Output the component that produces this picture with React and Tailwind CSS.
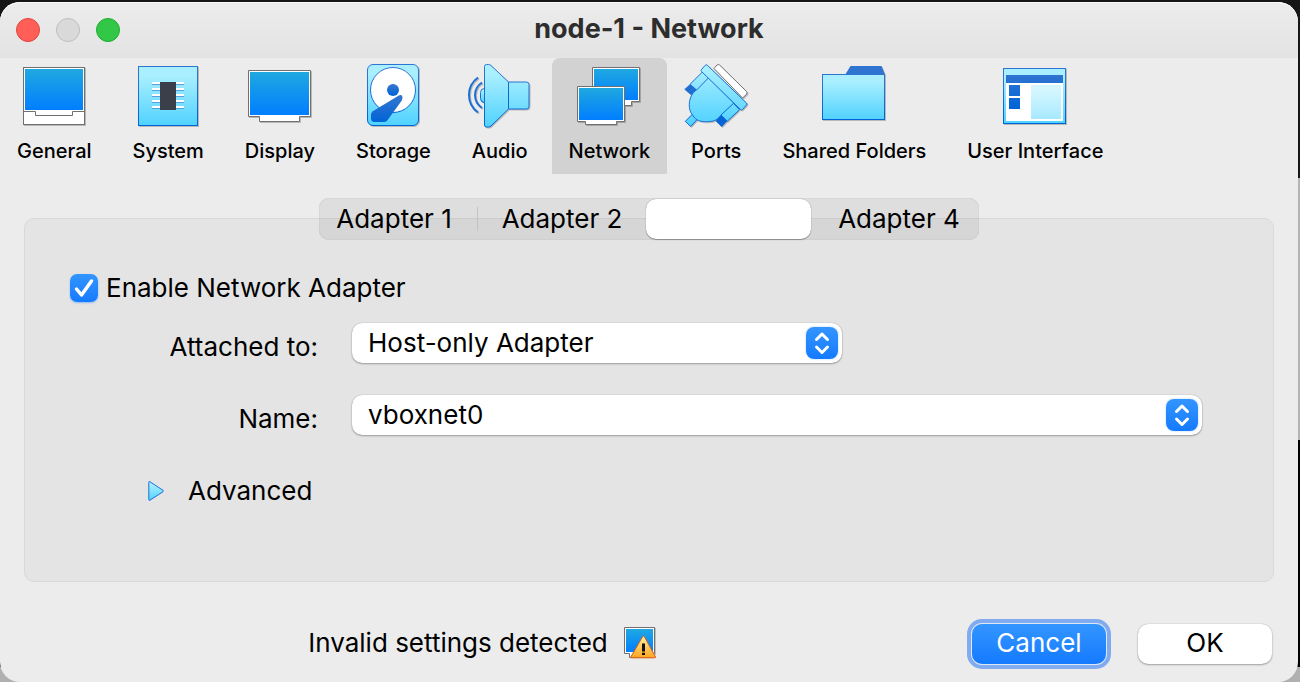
import React from 'react';

const DARK = 'url(#dark)';
const LIGHT = 'url(#light)';
const SCREEN = 'url(#screen)';

function Gradients() {
  return (
    <svg className="absolute h-0 w-0" aria-hidden="true">
      <defs>
        <linearGradient id="light" x1="0" y1="0" x2="0" y2="1">
          <stop offset="0.15" stopColor="#aaefff" />
          <stop offset="1" stopColor="#50d2ff" />
        </linearGradient>
        <linearGradient id="dark" x1="0" y1="0" x2="0" y2="1">
          <stop offset="0.15" stopColor="#2f74d0" />
          <stop offset="1" stopColor="#0064d7" />
        </linearGradient>
        <linearGradient id="screen" x1="0" y1="0" x2="0" y2="1">
          <stop offset="0" stopColor="#20a8e0" />
          <stop offset="1" stopColor="#007eff" />
        </linearGradient>
        <linearGradient id="warn" x1="0" y1="0" x2="0" y2="1">
          <stop offset="0" stopColor="#fff0a0" />
          <stop offset="1" stopColor="#ffa51e" />
        </linearGradient>
        <linearGradient id="portLight" gradientUnits="userSpaceOnUse" x1="0" y1="4" x2="0" y2="60">
          <stop offset="0" stopColor="#aaefff" />
          <stop offset="1" stopColor="#50d2ff" />
        </linearGradient>
        <linearGradient id="tile" gradientUnits="userSpaceOnUse" x1="0" y1="11" x2="0" y2="45">
          <stop offset="0" stopColor="#2f74d0" />
          <stop offset="1" stopColor="#0064d7" />
        </linearGradient>
      </defs>
    </svg>
  );
}

function Icon({ children }) {
  return (
    <svg className="-mx-3 h-16 w-16 overflow-visible drop-shadow-[1px_1px_0px_rgba(0,0,0,0.22)]" viewBox="0 0 64 64" fill="none" aria-hidden="true">
      {children}
    </svg>
  );
}

const GeneralIcon = () => (
  <Icon>
    <rect x="1.5" y="3.5" width="61" height="57" fill="#fff" stroke="#707070" />
    <rect x="3" y="5" width="58" height="41" fill={SCREEN} />
    <path d="M1.5 47.5h12v4h37v-4h12" stroke="#707070" />
  </Icon>
);

const SystemIcon = () => (
  <Icon>
    <rect x="2.5" y="2.5" width="59" height="59" fill={LIGHT} stroke={DARK} />
    {[18, 24, 30, 36, 42].map((y) => (
      <g key={y}>
        <path d={`M16 ${y + 1}h32`} stroke="#fff" strokeWidth="2" />
        <path d={`M16 ${y + 2.5}h32`} stroke="#5b9fe0" />
      </g>
    ))}
    <rect x="24" y="18" width="16" height="28" fill="#3a3f4a" />
  </Icon>
);

const DisplayIcon = () => (
  <Icon>
    <path d="M.5 6.5h62v46h-11v5h-40v-5h-11z" fill="#fff" stroke="#707070" />
    <rect x="2" y="8" width="59" height="43" fill={SCREEN} />
  </Icon>
);

const StorageIcon = () => (
  <Icon>
    <rect x="6.5" y=".5" width="51" height="61" rx="5.5" fill={LIGHT} stroke={DARK} />
    <circle cx="32" cy="26" r="22.5" fill="#fff" stroke={DARK} />
    <circle cx="32" cy="26" r="6" fill={DARK} />
    <path d="M37 32q3-2 4.2 0 .8 1.5-.4 4.5L27 55.5Q25.5 58 23 58H12.5Q10 57.5 10 55v-4q0-3 3-4.5z" fill={DARK} />
  </Icon>
);

const AudioIcon = () => (
  <Icon>
    <path d="M16.5 24.5q-4 0-4 4v6q0 4 4 4z" fill={LIGHT} stroke={DARK} />
    <path d="M16.5 2.5q0-2 2-2h2q1.5 0 2.5 1L40.5 18h18q2.5 0 2.5 2.5v22q0 2.5-2.5 2.5h-18L23 62q-1 1-2.5 1h-2q-2 0-2-2z" fill={LIGHT} stroke={DARK} />
    <path d="M40.5 18v27" stroke="#0f69d4" />
    <path d="M10 13.5Q1 20 1 31t9 17.5" stroke="#1c6fd6" strokeWidth="2" />
    <path d="M14 18.5Q7 23 7 31t7 13" stroke="#1c6fd6" strokeWidth="2" />
  </Icon>
);

const NetworkIcon = () => (
  <Icon>
    <path d="M15.5 3.5h47v34h-8v4h-31v-4h-8z" fill="#fff" stroke="#707070" />
    <rect x="17" y="5" width="44" height="31" fill={SCREEN} />
    <path d="M.5 22.5h47v35h-8v3h-31v-3h-8z" fill="#fff" stroke="#707070" />
    <rect x="2" y="24" width="44" height="32" fill={SCREEN} />
  </Icon>
);

const PortsIcon = () => (
  <Icon>
    <path d="M30 4.5l3-3.5q1.3-1 2.6 0l27 26.5q1 1.3 0 2.5l-4 4z" fill="#fff" stroke="#707070" />
    <path d="M8.3 50.3l5 5-6.6 7.2-5.4-5.2z" fill="url(#portLight)" stroke="#0f69d4" />
    <path d="M24.3 13.3L9.5 28.5C4 35 4 46 8.5 51 12 57 17 57.7 22.7 57.7c5 0 9-.7 12-4L50 39.3z" fill="url(#portLight)" stroke="#1c6fd6" />
    <path d="M18.7 7.7l6 6L12.7 26 6 20.3z" fill="url(#portLight)" stroke="#1c6fd6" />
    <path d="M6 20.3l6.7 5.7L7 31 .3 25.3z" fill="#1f6fd2" />
    <path d="M49.5 39.3l6 6.5L43.3 57.2 37 51z" fill="url(#portLight)" stroke="#0f69d4" />
    <path d="M37 51l6.3 6-5.6 6-6-6z" fill="#0664d6" />
    <path d="M21 1.5q1.3-1.5 2.6 0L62.5 39q1 1 0 2l-4 4.5q-1 1-2 0L17.5 7.5q-1-1 0-2z" fill="url(#portLight)" stroke="#1c6fd6" />
  </Icon>
);

const FolderIcon = () => (
  <Icon>
    <path d="M23.3 10.5l5.2-8.5h31l3.5 8.5z" fill="#2f74d0" />
    <rect x=".5" y="10.5" width="62" height="45" fill={LIGHT} stroke={DARK} />
  </Icon>
);

const InterfaceIcon = () => (
  <Icon>
    <rect x=".5" y="4.5" width="62" height="55" fill={LIGHT} stroke={DARK} />
    <path d="M3 19h57v38H3z" fill="#fff" />
    <path d="M3 11h57v8H3zM6 21h11v11H6zM6 34h11v11H6z" fill="url(#tile)" />
    <rect x="28" y="21" width="30" height="34" fill={LIGHT} fillOpacity="0.5" />
  </Icon>
);

const WarningIcon = () => (
  <svg className="h-8 w-8 overflow-visible" viewBox="0 0 32 32" fill="none" aria-hidden="true">
    <path d="M31.5 1v27" stroke="#bdbdbd" />
    <path d="M.5.5h30v26h-4v4h-21v-4h-5z" fill="#fff" stroke="#707070" />
    <rect x="2" y="2" width="27" height="23" fill={SCREEN} />
    <path d="M18.4 10q1.1-1.5 2.2 0L31.5 30q0 .8-.7.8H7.5q-.7 0-.7-.8z" fill="url(#warn)" stroke="#d65a14" />
    <path d="M18 16.5h3v8h-3zM18 25.7h3V28h-3z" fill="#111" />
  </svg>
);

const sections = [
  ['General', GeneralIcon],
  ['System', SystemIcon],
  ['Display', DisplayIcon],
  ['Storage', StorageIcon],
  ['Audio', AudioIcon],
  ['Network', NetworkIcon],
  ['Ports', PortsIcon],
  ['Shared Folders', FolderIcon],
  ['User Interface', InterfaceIcon],
];

function Select({ id, value, className }) {
  return (
    <div className={`relative ${className}`}>
      <select
        id={id}
        defaultValue={value}
        className="block h-10 w-full appearance-none rounded-[10px] bg-white pr-12 pl-4 leading-8 shadow-[0_1px_2px_rgba(0,0,0,0.3),0_0_1px_rgba(0,0,0,0.35)] outline-none"
      >
        <option>{value}</option>
      </select>
      <span className="pointer-events-none absolute top-1 right-1 flex h-8 w-8 items-center justify-center rounded-lg bg-linear-to-b from-[#3395ff] to-[#147aff] shadow-[0_0_2px_rgba(20,122,255,0.4)]">
        <svg className="h-8 w-8" viewBox="0 0 32 32" fill="none" stroke="#fff" strokeWidth="3" strokeLinecap="round" strokeLinejoin="round" aria-hidden="true">
          <path d="M10.5 12.5L16 7l5.5 5.5M10.5 20l5.5 5.5 5.5-5.5" />
        </svg>
      </span>
    </div>
  );
}

export default function App() {
  return (
    <div className="flex min-h-screen flex-col bg-[linear-gradient(#171616_0_178px,#b4b4b4_178px_440px,#000_440px_667px,#b0b0b0_667px)] pt-[2px] pr-[2px] font-['Inter',sans-serif] text-[26px] text-black">
      <Gradients />
      <div className="flex flex-1 flex-col rounded-[20px] bg-[#ececec]">
        <header className="grid h-14 grid-cols-[1fr_auto_1fr] items-center rounded-t-[20px] bg-linear-to-b from-[#ececec] to-[#e3e3e3] px-4 shadow-[inset_0_1px_0_#fafafa]">
          <div className="flex gap-4">
            <button aria-label="Close" className="h-6 w-6 rounded-full border border-[#e0443e] bg-[#ff5f57]" />
            <button aria-label="Minimize" disabled className="h-6 w-6 rounded-full border border-[#bebebe] bg-[#d9d9d9]" />
            <button aria-label="Zoom" className="h-6 w-6 rounded-full border border-[#1dad2b] bg-[#33c748]" />
          </div>
          <h1 className="pb-[2px] text-[27px] leading-8 font-bold text-[#2d2d2d]">node-1 - Network</h1>
        </header>

        <nav className="flex gap-[7px]">
          {sections.map(([name, Glyph]) => (
            <button
              key={name}
              aria-current={name === 'Network' ? 'page' : undefined}
              className={`flex h-[116px] flex-col items-center gap-[9px] px-[17px] pt-[6px] text-xl leading-7 font-medium whitespace-nowrap ${name === 'Network' ? 'rounded-t-lg bg-[#d2d2d2]' : ''}`}
            >
              <Glyph />
              {name}
            </button>
          ))}
        </nav>

        <main className="flex flex-1 flex-col px-6 pt-6">
          <div role="tablist" className="relative z-10 mx-auto grid h-[42px] w-[660px] grid-cols-[159px_168px_165px_168px] items-center rounded-[10px] bg-black/6 shadow-[inset_0_0_1px_rgba(0,0,0,0.25)]">
            <button role="tab" aria-selected="false" className="h-6 border-r border-[#c4c4c4] pr-2 leading-6">Adapter 1</button>
            <button role="tab" aria-selected="false" className="h-6 leading-6">Adapter 2</button>
            <button role="tab" aria-selected="true" aria-label="Adapter 3" className="h-10 rounded-[10px] bg-white shadow-[0_1px_1px_rgba(0,0,0,0.3),0_0_1px_rgba(0,0,0,0.4)]" />
            <button role="tab" aria-selected="false" className="h-6 pl-2 leading-6">Adapter 4</button>
          </div>

          <section className="-mt-[22px] flex h-[364px] flex-col rounded-[10px] border border-[#d9d9d9] bg-[#e4e4e4] pt-[55px] pr-[71px] pl-[45px]">
            <label className="flex items-center gap-2 leading-7">
              <span className="relative h-7 w-7">
                <input type="checkbox" defaultChecked className="block h-7 w-7 appearance-none rounded-[7px] bg-linear-to-b from-[#3395ff] to-[#147aff] shadow-[0_1px_2px_rgba(20,122,255,0.4)]" />
                <svg className="pointer-events-none absolute inset-0 h-7 w-7" viewBox="0 0 28 28" fill="none" stroke="#fff" strokeWidth="3.5" strokeLinecap="round" strokeLinejoin="round" aria-hidden="true">
                  <path d="M6.5 15l5 6 10-14" />
                </svg>
              </span>
              Enable Network Adapter
            </label>
            <div className="mt-[21px] grid grid-cols-[248px_1fr] gap-x-[34px] gap-y-8">
              <label htmlFor="attached" className="pt-2 text-right leading-8">Attached to:</label>
              <Select id="attached" value="Host-only Adapter" className="w-[490px]" />
              <label htmlFor="adapter-name" className="pt-2 text-right leading-8">Name:</label>
              <Select id="adapter-name" value="vboxnet0" className="w-full" />
            </div>
            <button aria-expanded="false" className="mt-10 ml-[78px] flex items-center gap-6 self-start leading-8">
              <svg className="h-5 w-4" viewBox="0 0 16 20" aria-hidden="true">
                <path d="M.8 1.2Q1 0 2 .8l13 8.5q1 .7 0 1.4L2 19.2q-1 .6-1.2-.5z" fill={LIGHT} stroke="#1c6fd6" />
              </svg>
              Advanced
            </button>
          </section>
        </main>

        <footer className="flex items-center pr-[26px] pb-[18px]">
          <div className="flex flex-1 items-center justify-center gap-4 pr-2 pb-[2px] leading-8">
            <span>Invalid settings detected</span>
            <WarningIcon />
          </div>
          <div className="flex gap-8 leading-8">
            <button className="h-10 w-[134px] rounded-[10px] bg-linear-to-b from-[#3395ff] to-[#147aff] pb-[2px] text-white shadow-[0_0_0_1px_#dfe8f7,0_0_0_5px_#80abee]">Cancel</button>
            <button className="h-10 w-[134px] rounded-[10px] bg-white pb-[2px] shadow-[0_1px_2px_rgba(0,0,0,0.3),0_0_1px_rgba(0,0,0,0.35)]">OK</button>
          </div>
        </footer>
      </div>
    </div>
  );
}
